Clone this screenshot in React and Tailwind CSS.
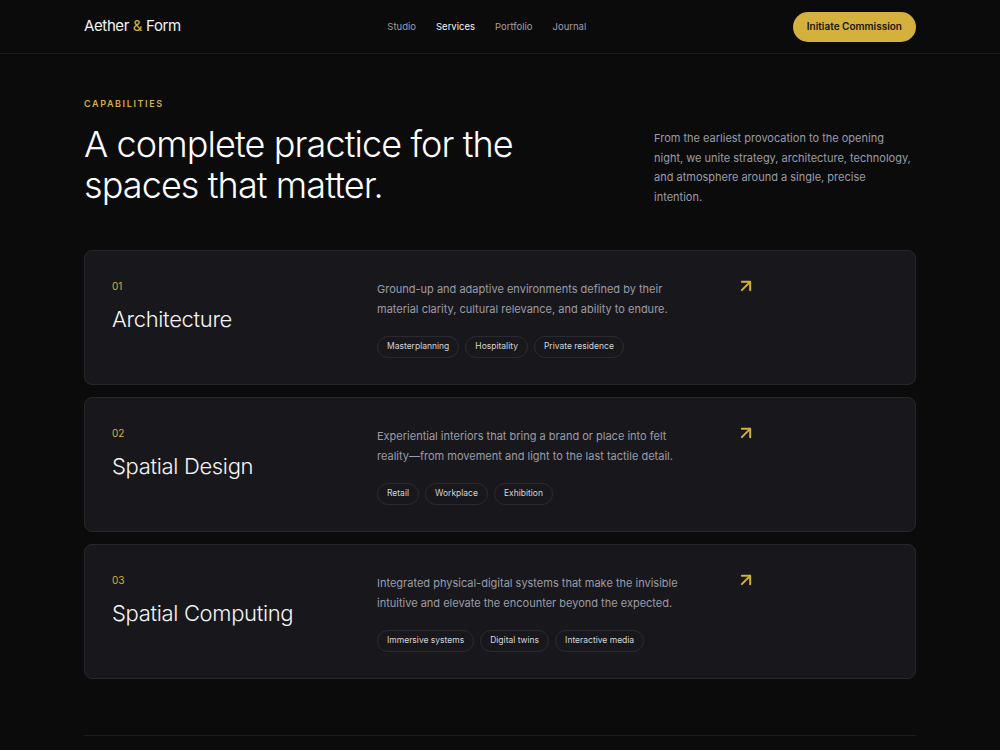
import { ArrowUpRight } from "lucide-react";

const services = [
  {
    num: "01",
    title: "Architecture",
    text: "Ground-up and adaptive environments defined by their material clarity, cultural relevance, and ability to endure.",
    tags: ["Masterplanning", "Hospitality", "Private residence"],
  },
  {
    num: "02",
    title: "Spatial Design",
    text: "Experiential interiors that bring a brand or place into felt reality—from movement and light to the last tactile detail.",
    tags: ["Retail", "Workplace", "Exhibition"],
  },
  {
    num: "03",
    title: "Spatial Computing",
    text: "Integrated physical-digital systems that make the invisible intuitive and elevate the encounter beyond the expected.",
    tags: ["Immersive systems", "Digital twins", "Interactive media"],
  },
];

function Header() {
  return (
    <header className="border-b border-[#1c1c1f]">
      <div className="mx-auto flex h-[53px] w-[832px] items-center justify-between">
        <a className="text-[15px] text-zinc-100 tracking-tight">
          Aether <span className="text-[#d4b03c]">&amp;</span> Form
        </a>
        <nav className="flex items-center gap-5 pt-px text-[9.5px] text-zinc-400">
          <a>Studio</a>
          <a className="text-zinc-100">Services</a>
          <a>Portfolio</a>
          <a>Journal</a>
        </nav>
        <button className="h-[30px] rounded-full bg-[#d4b03c] px-[14px] text-[10px] font-semibold text-[#17140a]">
          Initiate Commission
        </button>
      </div>
    </header>
  );
}

function ServiceCard({ item }) {
  return (
    <div className="grid grid-cols-[241px_310px_45px] gap-6 rounded-lg border border-[#26262b] bg-[#18181c] px-[27px] pt-7 pb-[26px]">
      <div>
        <div className="text-[10px] leading-[14px] text-[#d4b03c]">{item.num}</div>
        <h3 className="mt-3 text-[22px] leading-[28px] font-light tracking-[-0.015em] text-zinc-100">
          {item.title}
        </h3>
      </div>
      <div>
        <p className="text-[11px] leading-[20px] text-[#9b9ca8]">{item.text}</p>
        <div className="mt-[17px] flex gap-[6px]">
          {item.tags.map((t) => (
            <span
              key={t}
              className="flex h-[22px] items-center rounded-full border border-[#2a2a30] px-[9px] text-[8.5px] text-zinc-300"
            >
              {t}
            </span>
          ))}
        </div>
      </div>
      <div className="-mt-[3px] flex justify-end">
        <ArrowUpRight className="h-5 w-5 text-[#d4b03c]" strokeWidth={2.4} />
      </div>
    </div>
  );
}

export default function App() {
  return (
    <div className="min-h-screen bg-[#0b0b0c] font-['Inter',sans-serif]">
      <Header />
      <main className="mx-auto w-[832px] pt-[43px]">
        <div className="text-[9px] font-semibold tracking-[0.18em] text-[#d4b03c]">CAPABILITIES</div>
        <div className="mt-[13px] flex items-end justify-between">
          <h1 className="text-[36px] leading-[41px] font-light tracking-tight text-white">
            A complete practice for the
            <br />
            spaces that matter.
          </h1>
          <p className="-mb-[2px] w-[262px] text-[11px] leading-[19.6px] text-[#9b9ca8]">
            From the earliest provocation to the opening night, we unite strategy, architecture, technology,
            and atmosphere around a single, precise intention.
          </p>
        </div>
        <div className="mt-[44px] flex flex-col gap-3">
          {services.map((s) => (
            <ServiceCard key={s.num} item={s} />
          ))}
        </div>
        <div className="mt-[56px] border-t border-[#1c1c1f] pb-10" />
      </main>
    </div>
  );
}
